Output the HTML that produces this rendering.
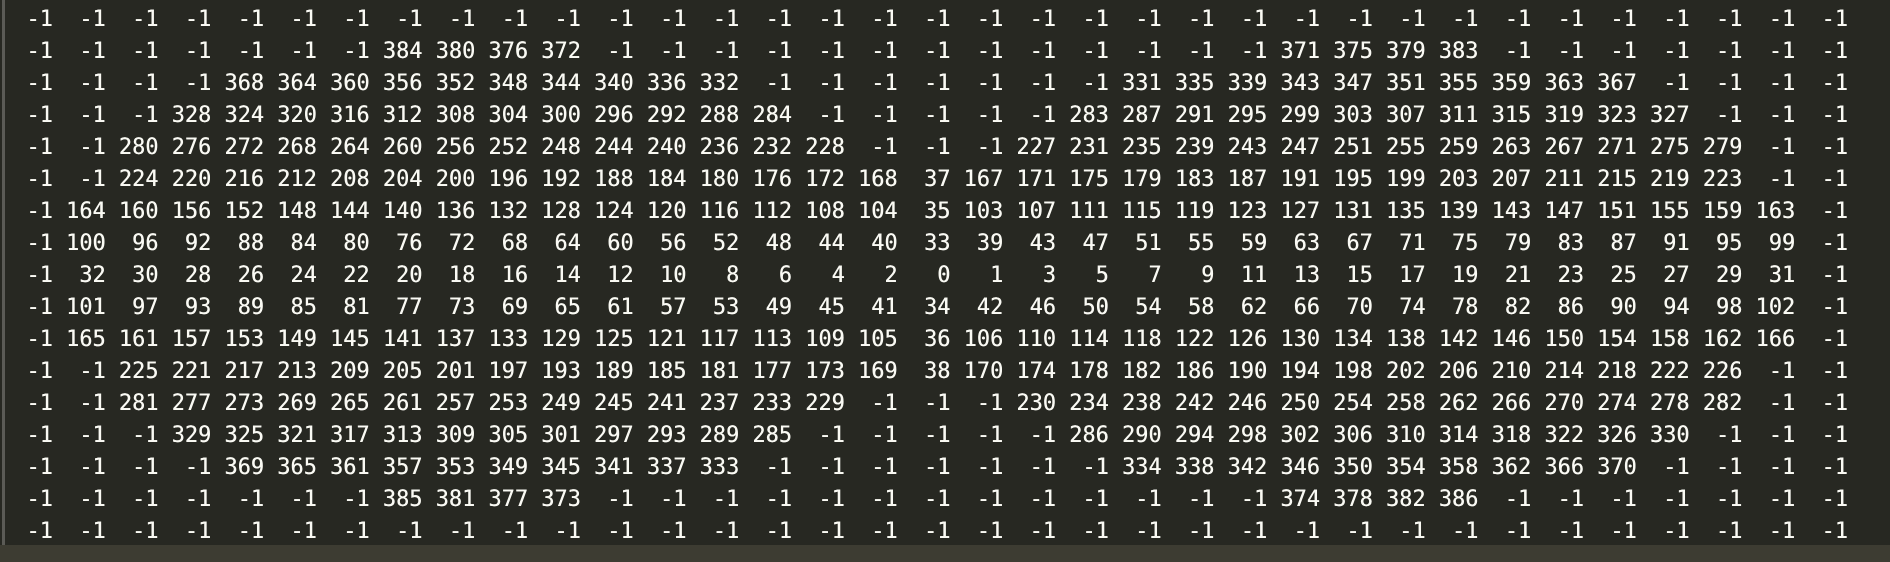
<!DOCTYPE html>
<html><head><meta charset="utf-8"><style>
html,body{margin:0;padding:0;}
body{width:1890px;height:562px;background:#272822;position:relative;overflow:hidden;}
.bl{position:absolute;left:2px;top:0;width:3px;height:545px;background:#5b5b56;}
.bb{position:absolute;left:0;top:545px;width:1890px;height:17px;background:#3d3c32;}
pre{position:absolute;left:0;top:4px;margin:0;font-family:"DejaVu Sans Mono","Liberation Mono",monospace;font-size:21.9px;line-height:32px;color:#fafaf4;letter-spacing:0.02px;text-shadow:0.3px 0 0 #fafaf4;}
</style></head><body>
<div class="bl"></div>
<pre>  -1  -1  -1  -1  -1  -1  -1  -1  -1  -1  -1  -1  -1  -1  -1  -1  -1  -1  -1  -1  -1  -1  -1  -1  -1  -1  -1  -1  -1  -1  -1  -1  -1  -1  -1
  -1  -1  -1  -1  -1  -1  -1 384 380 376 372  -1  -1  -1  -1  -1  -1  -1  -1  -1  -1  -1  -1  -1 371 375 379 383  -1  -1  -1  -1  -1  -1  -1
  -1  -1  -1  -1 368 364 360 356 352 348 344 340 336 332  -1  -1  -1  -1  -1  -1  -1 331 335 339 343 347 351 355 359 363 367  -1  -1  -1  -1
  -1  -1  -1 328 324 320 316 312 308 304 300 296 292 288 284  -1  -1  -1  -1  -1 283 287 291 295 299 303 307 311 315 319 323 327  -1  -1  -1
  -1  -1 280 276 272 268 264 260 256 252 248 244 240 236 232 228  -1  -1  -1 227 231 235 239 243 247 251 255 259 263 267 271 275 279  -1  -1
  -1  -1 224 220 216 212 208 204 200 196 192 188 184 180 176 172 168  37 167 171 175 179 183 187 191 195 199 203 207 211 215 219 223  -1  -1
  -1 164 160 156 152 148 144 140 136 132 128 124 120 116 112 108 104  35 103 107 111 115 119 123 127 131 135 139 143 147 151 155 159 163  -1
  -1 100  96  92  88  84  80  76  72  68  64  60  56  52  48  44  40  33  39  43  47  51  55  59  63  67  71  75  79  83  87  91  95  99  -1
  -1  32  30  28  26  24  22  20  18  16  14  12  10   8   6   4   2   0   1   3   5   7   9  11  13  15  17  19  21  23  25  27  29  31  -1
  -1 101  97  93  89  85  81  77  73  69  65  61  57  53  49  45  41  34  42  46  50  54  58  62  66  70  74  78  82  86  90  94  98 102  -1
  -1 165 161 157 153 149 145 141 137 133 129 125 121 117 113 109 105  36 106 110 114 118 122 126 130 134 138 142 146 150 154 158 162 166  -1
  -1  -1 225 221 217 213 209 205 201 197 193 189 185 181 177 173 169  38 170 174 178 182 186 190 194 198 202 206 210 214 218 222 226  -1  -1
  -1  -1 281 277 273 269 265 261 257 253 249 245 241 237 233 229  -1  -1  -1 230 234 238 242 246 250 254 258 262 266 270 274 278 282  -1  -1
  -1  -1  -1 329 325 321 317 313 309 305 301 297 293 289 285  -1  -1  -1  -1  -1 286 290 294 298 302 306 310 314 318 322 326 330  -1  -1  -1
  -1  -1  -1  -1 369 365 361 357 353 349 345 341 337 333  -1  -1  -1  -1  -1  -1  -1 334 338 342 346 350 354 358 362 366 370  -1  -1  -1  -1
  -1  -1  -1  -1  -1  -1  -1 385 381 377 373  -1  -1  -1  -1  -1  -1  -1  -1  -1  -1  -1  -1  -1 374 378 382 386  -1  -1  -1  -1  -1  -1  -1
  -1  -1  -1  -1  -1  -1  -1  -1  -1  -1  -1  -1  -1  -1  -1  -1  -1  -1  -1  -1  -1  -1  -1  -1  -1  -1  -1  -1  -1  -1  -1  -1  -1  -1  -1</pre>
<div class="bb"></div>
</body></html>
